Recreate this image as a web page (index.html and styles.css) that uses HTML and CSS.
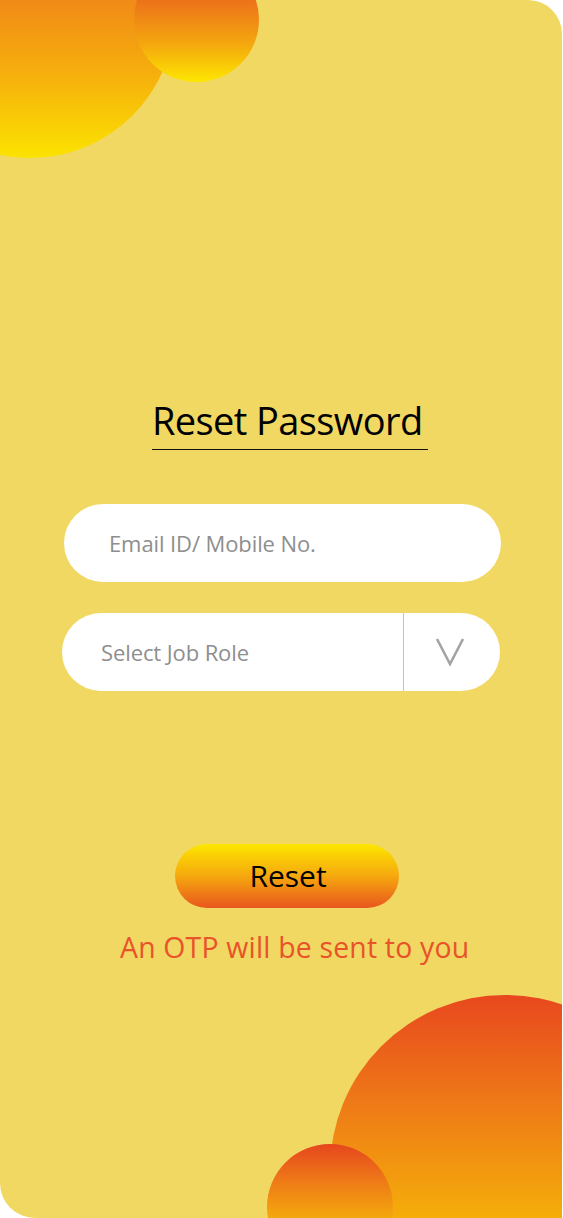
FILE: index.html
```html
<!DOCTYPE html>
<html lang="en">
<head>
<meta charset="utf-8">
<title>Reset Password</title>
<link rel="stylesheet" href="styles.css">
</head>
<body>
<div class="card">
  <div class="blob blob-tl-big"></div>
  <div class="blob blob-tl-small"></div>
  <div class="blob blob-br-big"></div>
  <div class="blob blob-br-small"></div>

  <main class="content">
    <h1 class="title">Reset Password</h1>

    <div class="field field-email">
      <span class="placeholder">Email ID/ Mobile No.</span>
    </div>

    <div class="field field-select">
      <span class="placeholder select-text">Select Job Role</span>
      <span class="select-arrow">
        <svg width="30" height="30" viewBox="0 0 30 30" aria-hidden="true">
          <polyline points="2,2 15,27 28,2" fill="none" stroke="#a3a3a3" stroke-width="2.6" stroke-linejoin="miter"/>
        </svg>
      </span>
    </div>

    <button class="reset-btn" type="button">Reset</button>

    <p class="otp-note">An OTP will be sent to you</p>
  </main>
</div>
</body>
</html>
```

FILE: styles.css
```css
* { box-sizing: border-box; }

html, body {
  margin: 0;
  padding: 0;
  background: #ffffff;
}

body {
  font-family: "Open Sans", "Noto Sans", "Liberation Sans", sans-serif;
}

.card {
  position: relative;
  width: 562px;
  height: 1218px;
  background: #f1d862;
  border-radius: 0 34px 0 35px;
  overflow: hidden;
}

.blob {
  position: absolute;
  border-radius: 50%;
}

.blob-tl-big {
  left: -115px;
  top: -132px;
  width: 290px;
  height: 290px;
  background: linear-gradient(to bottom, #e95a1e 0%, #f08a17 45%, #f6ad0d 70%, #fbe300 100%);
}

.blob-tl-small {
  left: 134px;
  top: -43px;
  width: 125px;
  height: 125px;
  background: linear-gradient(to bottom, #e84f1e 0%, #ec711a 34%, #f4a80e 70%, #fde600 100%);
}

.blob-br-big {
  left: 330px;
  top: 995px;
  width: 350px;
  height: 350px;
  background: linear-gradient(to bottom, #e8481e 0%, #ee7817 30%, #f5ae0a 64%, #fbe000 100%);
}

.blob-br-small {
  left: 267px;
  top: 1144px;
  width: 126px;
  height: 126px;
  background: linear-gradient(to bottom, #e6461f 0%, #ee7b17 30%, #f4a80d 59%, #fbe000 100%);
}

.content {
  position: relative;
  display: flex;
  flex-direction: column;
  align-items: flex-start;
  padding-top: 400px;
}

.title {
  margin: 0 0 0 152px;
  padding: 0 5px 9px 0;
  font-size: 38px;
  line-height: 40px;
  font-weight: 400;
  color: #000000;
  border-bottom: 1.5px solid #111111;
  letter-spacing: -0.6px;
}

.field {
  display: flex;
  align-items: center;
  height: 78px;
  background: #ffffff;
  border-radius: 39px;
}

.placeholder {
  color: #8e8e8e;
  font-size: 22px;
  font-weight: 400;
  letter-spacing: -0.1px;
}

.field-email {
  margin: 54px 0 0 64px;
  width: 437px;
  padding-left: 45px;
}

.field-select {
  margin: 31px 0 0 62px;
  width: 438px;
}

.select-text {
  flex: 0 0 342px;
  padding-left: 39px;
  height: 100%;
  display: flex;
  align-items: center;
  border-right: 1.5px solid #c2c2c2;
}

.select-arrow {
  flex: 1;
  display: flex;
  align-items: center;
  justify-content: center;
  padding-right: 4px;
}

.select-arrow svg { display: block; }

.reset-btn {
  margin: 153px 0 0 175px;
  width: 224px;
  height: 64px;
  border: none;
  border-radius: 32px;
  background: linear-gradient(to bottom, #fde600 0%, #f5a80e 50%, #e9561e 100%);
  color: #000000;
  font-family: inherit;
  font-size: 30px;
  font-weight: 400;
  padding: 0 0 0 2px;
  line-height: 64px;
}

.otp-note {
  margin: 20px 0 0 120px;
  color: #e8532a;
  font-size: 28.4px;
  line-height: 38px;
  font-weight: 400;
  letter-spacing: 0.2px;
}
```
